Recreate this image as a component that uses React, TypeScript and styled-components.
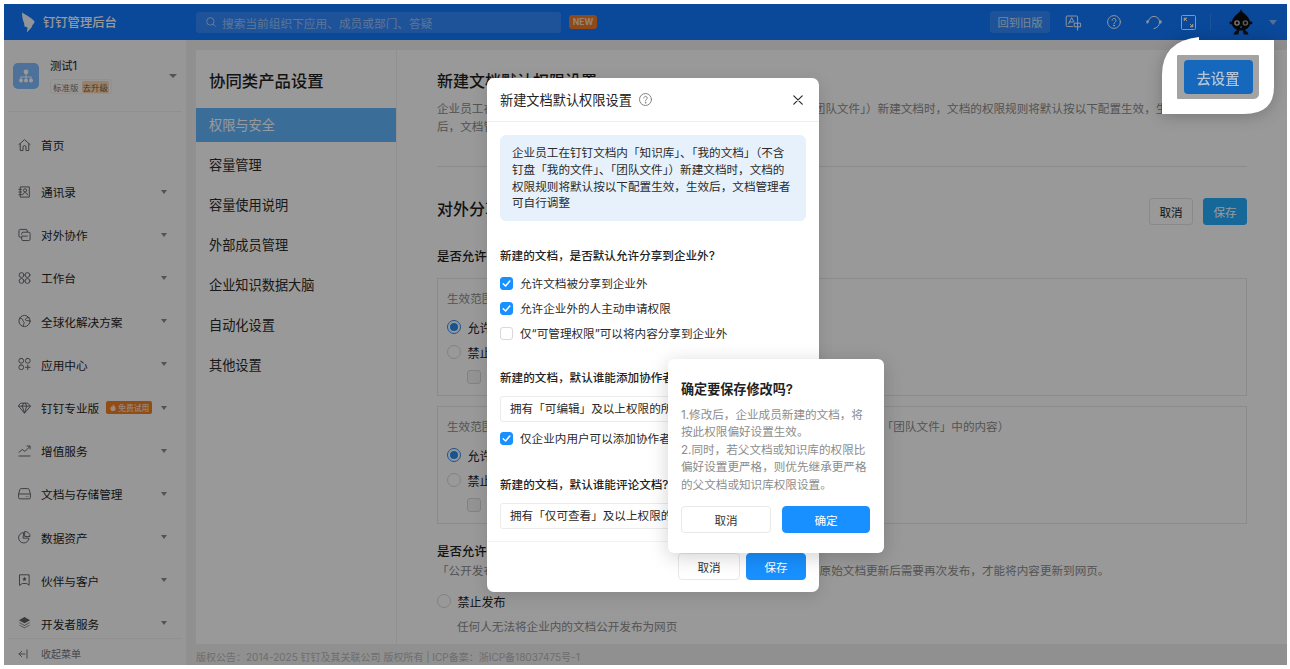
import React from 'react';
import styled, { createGlobalStyle } from 'styled-components';

const GlobalStyle = createGlobalStyle`
  html, body {
    margin: 0;
    padding: 0;
    background: #fff;
  }
  body {
    font-family: Inter, "Noto Sans CJK SC", "Noto Sans", sans-serif;
    color: #222;
  }
  * {
    box-sizing: border-box;
  }
`;

const Page = styled.div`
  width: 1290px;
  height: 669px;
  padding: 4px 3px 4px 4px;
  overflow: hidden;
`;

const Frame = styled.div`
  position: relative;
  width: 1283px;
  height: 661px;
  overflow: hidden;
  display: flex;
  flex-direction: column;
  background: #f0f0f1;
`;

/* ---------- header ---------- */

const Header = styled.header`
  flex: none;
  height: 36px;
  display: flex;
  align-items: center;
  background: #1279ff;
  color: #fff;
`;

const LogoBox = styled.div`
  width: 192px;
  display: flex;
  align-items: center;
  padding-left: 17px;
  gap: 8px;
`;

const LogoTitle = styled.span`
  font-size: 12.3px;
  font-weight: 500;
`;

const SearchBox = styled.div`
  width: 365px;
  height: 21px;
  display: flex;
  align-items: center;
  gap: 6px;
  padding-left: 10px;
  border-radius: 3px;
  background: rgba(255, 255, 255, 0.14);
  font-size: 11.7px;
  color: rgba(255, 255, 255, 0.5);
`;

const NewBadge = styled.span`
  position: relative;
  margin-left: 8px;
  width: 28px;
  height: 14px;
  border-radius: 3px;
  background: #f07a28;
  color: rgba(255, 255, 255, 0.75);
  font-size: 8.5px;
  font-weight: 700;
  line-height: 14px;
  text-align: center;
`;

const HeaderRight = styled.div`
  margin-left: auto;
  display: flex;
  align-items: center;
  color: rgba(255, 255, 255, 0.95);
`;

const OldButton = styled.button`
  width: 60px;
  height: 22px;
  padding: 0;
  border: 0;
  border-radius: 3px;
  background: rgba(255, 255, 255, 0.14);
  color: rgba(255, 255, 255, 0.75);
  font: inherit;
  font-size: 11.3px;
`;

const HeaderIcon = styled.span<{ $left: number }>`
  display: flex;
  margin-left: ${(p) => p.$left}px;
`;

const HeaderDivider = styled.span`
  width: 1px;
  height: 16px;
  margin: 0 18px 0 14px;
  background: rgba(255, 255, 255, 0.14);
`;

const HeaderCaret = styled.span`
  margin: 0 10px 0 16px;
  width: 0;
  height: 0;
  border-left: 4px solid transparent;
  border-right: 4px solid transparent;
  border-top: 5px solid rgba(255, 255, 255, 0.5);
`;

/* ---------- sidebar ---------- */

const Body = styled.div`
  flex: 1;
  min-height: 0;
  display: flex;
`;

const Sidebar = styled.aside`
  flex: none;
  width: 182px;
  display: flex;
  flex-direction: column;
  background: #fcfcfe;
`;

const OrgCard = styled.div`
  flex: none;
  height: 72px;
  margin: 0 4px;
  padding: 23px 0 0 5px;
  display: flex;
  gap: 11px;
  border-bottom: 1px solid #f0f0f2;
`;

const OrgAvatar = styled.div`
  width: 26px;
  height: 26px;
  border-radius: 5px;
  background: #80bcff;
  display: flex;
  align-items: center;
  justify-content: center;
`;

const OrgInfo = styled.div`
  margin-top: -5px;
  display: flex;
  flex-direction: column;
  align-items: flex-start;
  gap: 5px;
`;

const OrgName = styled.span`
  font-size: 11.3px;
  line-height: 16px;
  color: #222;
`;

const OrgTag = styled.span`
  display: flex;
  align-items: center;
  height: 15px;
  padding: 0 2px;
  border: 1px solid #f0f0f0;
  border-radius: 3px;
  font-size: 8.5px;
  color: #777;
  gap: 3px;
`;

const UpgradeTag = styled.span`
  padding: 0 1px;
  border-radius: 2px;
  background: #fbd9b5;
  color: #7d5c35;
`;

const Caret = styled.span`
  flex: none;
  width: 0;
  height: 0;
  margin-left: auto;
  border-left: 3.5px solid transparent;
  border-right: 3.5px solid transparent;
  border-top: 4.5px solid #8a8a8c;
`;

const OrgCaret = styled(Caret)`
  margin-top: 11px;
  margin-right: 5px;
  border-left-width: 4px;
  border-right-width: 4px;
`;

const Nav = styled.nav`
  flex: 1;
  min-height: 0;
  overflow: hidden;
  padding-top: 11px;
`;

const NavItem = styled.div`
  height: 43.2px;
  display: flex;
  align-items: center;
  padding: 0 19px 0 14px;
  font-size: 11.65px;
  color: #1f1f1f;
  &:first-child {
    margin-bottom: 3.8px;
  }
`;

const NavIcon = styled.span`
  display: flex;
  width: 13px;
  margin-right: 10px;
  color: #5d5f63;
`;

const TrialBadge = styled.span`
  display: flex;
  align-items: center;
  gap: 2px;
  margin-left: 7px;
  width: 46px;
  height: 13px;
  padding-left: 4px;
  border-radius: 2px;
  background: #f57f1e;
  color: rgba(255, 255, 255, 0.75);
  font-size: 7.8px;
  font-weight: 500;
`;

const Collapse = styled.div`
  flex: none;
  height: 27px;
  margin: 0 4px;
  padding: 3px 0 0 10px;
  display: flex;
  align-items: center;
  gap: 13px;
  border-top: 1px solid #f0f0f2;
  font-size: 10px;
  color: #777;
`;

/* ---------- main ---------- */

const Main = styled.main`
  flex: 1;
  min-width: 0;
  display: flex;
  flex-direction: column;
  padding-top: 10px;
`;

const Columns = styled.div`
  flex: 1;
  min-height: 0;
  display: flex;
  gap: 1px;
  margin-left: 10px;
`;

const SettingsMenu = styled.div`
  flex: none;
  width: 200px;
  background: #fff;
`;

const MenuTitle = styled.h2`
  margin: 0;
  padding: 20px 13px 16px;
  height: 58px;
  font-size: 16.4px;
  line-height: 22px;
  font-weight: 500;
  color: #1f1f1f;
`;

const MenuItem = styled.div<{ $active?: boolean }>`
  height: 34px;
  margin-bottom: 6px;
  padding-left: 13px;
  line-height: 34px;
  font-size: 13.2px;
  color: ${(p) => (p.$active ? '#fff' : '#2a2a2a')};
  background: ${(p) => (p.$active ? '#62b8ff' : 'transparent')};
`;

const Content = styled.section`
  flex: 1;
  min-width: 0;
  overflow: hidden;
  background: #fff;
  padding: 20px 40px 0;
`;

const ContentTitle = styled.h3`
  margin: 0;
  font-size: 16px;
  line-height: 22px;
  font-weight: 500;
  color: #1f1f1f;
`;

const Desc = styled.p<{ $top: number }>`
  margin: ${(p) => p.$top}px 0 0;
  font-size: 11.6px;
  line-height: 18px;
  color: #8c8c8c;
  white-space: nowrap;
`;

const Rule = styled.hr`
  margin: 30px 0 0;
  border: 0;
  border-top: 1px solid #e8e8e8;
`;

const TitleRow = styled.div`
  margin-top: 31px;
  height: 27px;
  display: flex;
  align-items: flex-start;
  justify-content: space-between;
`;

const TitleActions = styled.div`
  display: flex;
  gap: 10px;
`;

const SmallButton = styled.button<{ $primary?: boolean }>`
  width: 44px;
  height: 27px;
  padding: 0;
  border: 1px solid ${(p) => (p.$primary ? '#25adff' : '#e4e4e4')};
  border-radius: 3px;
  background: ${(p) => (p.$primary ? '#25adff' : '#fff')};
  color: ${(p) => (p.$primary ? '#fff' : '#222')};
  font: inherit;
  font-size: 11.6px;
`;

const Question = styled.div<{ $top: number }>`
  margin-top: ${(p) => p.$top}px;
  font-size: 12.4px;
  line-height: 18px;
  font-weight: 500;
  color: #1f1f1f;
`;

const ScopeBox = styled.div<{ $top: number }>`
  margin-top: ${(p) => p.$top}px;
  height: 118px;
  padding: 11px 9px 0;
  border: 1px solid #e8e8e8;
`;

const ScopeText = styled.div`
  font-size: 11.6px;
  line-height: 18px;
  color: #8c8c8c;
  white-space: nowrap;
`;

const Radio = styled.span<{ $on?: boolean }>`
  flex: none;
  width: 14px;
  height: 14px;
  border-radius: 50%;
  border: 1px solid ${(p) => (p.$on ? '#2a8bf0' : '#d9d9d9')};
  background: #fff;
  display: flex;
  align-items: center;
  justify-content: center;
  &::after {
    content: '';
    width: 8px;
    height: 8px;
    border-radius: 50%;
    background: ${(p) => (p.$on ? '#2a8bf0' : 'transparent')};
  }
`;

const RadioRow = styled.div<{ $top: number }>`
  display: flex;
  align-items: center;
  gap: 6.5px;
  height: 18px;
  margin-top: ${(p) => p.$top}px;
  font-size: 12px;
  color: #222;
`;

const IndentBox = styled.span`
  display: block;
  width: 14px;
  height: 14px;
  margin: 9px 0 0 20px;
  border: 1px solid #d9d9d9;
  border-radius: 3px;
  background: #f5f5f5;
`;

const PublishNote = styled(Desc)`
  margin-left: 20px;
`;

const Footer = styled.footer`
  flex: none;
  height: 21px;
  margin-left: 10px;
  overflow: hidden;
  font-size: 10px;
  line-height: 27px;
  color: #b8b8b8;
  white-space: nowrap;
`;

/* ---------- overlays ---------- */

const Scrim = styled.div`
  position: absolute;
  inset: 0;
  background: rgba(0, 0, 0, 0.4);
`;

const Modal = styled.div`
  position: absolute;
  left: 483px;
  top: 74px;
  width: 332px;
  height: 514px;
  border-radius: 7px;
  background: #fff;
  box-shadow: 0 4px 16px rgba(0, 0, 0, 0.12);
  display: flex;
  flex-direction: column;
`;

const ModalHead = styled.div`
  flex: none;
  height: 44px;
  padding: 0 13px;
  display: flex;
  align-items: center;
  gap: 7px;
  border-bottom: 1px solid #eee;
  font-size: 13.2px;
  color: #222;
`;

const CloseIcon = styled.span`
  display: flex;
  margin-left: auto;
  margin-right: 3px;
  color: #2a2a2a;
`;

const ModalBody = styled.div`
  flex: 1;
  min-height: 0;
  padding: 13px 13px 0;
`;

const InfoBox = styled.div`
  height: 86px;
  padding: 10px 12px;
  border-radius: 6px;
  background: #e6f1fc;
  font-size: 11.6px;
  line-height: 16.8px;
  color: #2a2a2a;
  white-space: nowrap;
`;

const FieldLabel = styled.div<{ $top: number }>`
  margin-top: ${(p) => p.$top}px;
  font-size: 11.6px;
  line-height: 16px;
  font-weight: 500;
  color: #222;
  white-space: nowrap;
`;

const CheckRow = styled.div<{ $top: number }>`
  margin-top: ${(p) => p.$top}px;
  height: 16px;
  display: flex;
  align-items: center;
  gap: 7px;
  font-size: 11.6px;
  color: #2a2a2a;
  white-space: nowrap;
`;

const CheckBox = styled.span<{ $on?: boolean }>`
  flex: none;
  width: 13px;
  height: 13px;
  border-radius: 3px;
  border: 1px solid ${(p) => (p.$on ? '#1890ff' : '#d9d9d9')};
  background: ${(p) => (p.$on ? '#1890ff' : '#fff')};
  display: flex;
  align-items: center;
  justify-content: center;
`;

const SelectBox = styled.div<{ $top: number }>`
  margin-top: ${(p) => p.$top}px;
  height: 26px;
  padding-left: 9px;
  border: 1px solid #ececec;
  border-radius: 3px;
  font-size: 11.6px;
  line-height: 24px;
  color: #2a2a2a;
  white-space: nowrap;
  overflow: hidden;
`;

const ModalFoot = styled.div`
  flex: none;
  height: 51px;
  padding: 11px 13px 0;
  display: flex;
  justify-content: flex-end;
  gap: 6px;
  border-top: 1px solid #f2f2f2;
`;

const FootButton = styled.button<{ $primary?: boolean }>`
  height: 27px;
  width: ${(p) => (p.$primary ? 60 : 62)}px;
  padding: 0;
  border: 1px solid ${(p) => (p.$primary ? '#1890ff' : '#e8e8e8')};
  border-radius: 4px;
  background: ${(p) => (p.$primary ? '#1890ff' : '#fff')};
  color: ${(p) => (p.$primary ? '#fff' : '#333')};
  font: inherit;
  font-size: 11.6px;
`;

const Confirm = styled.div`
  position: absolute;
  left: 664px;
  top: 355px;
  width: 216px;
  height: 194px;
  padding: 21px 13px 0;
  border-radius: 6px;
  background: #fff;
  box-shadow: 0 4px 20px rgba(0, 0, 0, 0.18);
`;

const ConfirmTitle = styled.div`
  font-size: 13.1px;
  line-height: 18px;
  font-weight: 600;
  color: #222;
`;

const ConfirmText = styled.div`
  margin-top: 9px;
  font-size: 11.6px;
  line-height: 17.4px;
  color: #8c8c8c;
  white-space: nowrap;
`;

const ConfirmActions = styled.div`
  margin-top: 12px;
  display: flex;
  gap: 11px;
`;

const ConfirmButton = styled.button<{ $primary?: boolean }>`
  width: ${(p) => (p.$primary ? 88 : 90)}px;
  height: 27px;
  padding: 0;
  border: 1px solid ${(p) => (p.$primary ? '#1890ff' : '#e8e8e8')};
  border-radius: 4px;
  background: ${(p) => (p.$primary ? '#1890ff' : '#fff')};
  color: ${(p) => (p.$primary ? '#fff' : '#333')};
  font: inherit;
  font-size: 11.6px;
`;

const CoachShadow = styled.div`
  position: absolute;
  left: 1158px;
  top: 33px;
  filter: drop-shadow(0 2px 8px rgba(0, 0, 0, 0.22));
`;

const Coach = styled.div`
  width: 112px;
  height: 77px;
  padding: 18px 0 0 15px;
  background: #fff;
  clip-path: path('M37 0 L37 3 L112 3 L112 50 Q112 77 82 77 L0 77 L0 38 Q0 4 37 0 Z');
`;

const CoachHole = styled.div`
  width: 82px;
  height: 44px;
  border-radius: 1px 1px 5px 1px;
  background: #a3a3a3;
  display: flex;
  align-items: center;
  justify-content: center;
`;

const CoachButton = styled.button`
  width: 69px;
  height: 34px;
  padding: 0;
  border: 0;
  border-radius: 4px;
  background: #1668bd;
  color: #b4c4d6;
  font: inherit;
  font-size: 14.4px;
  font-weight: 500;
`;

/* ---------- drawings ---------- */

const LogoMark = () => (
  <svg width="14" height="21" viewBox="0 0 14 21" fill="rgba(255,255,255,0.95)">
    <path d="M1 0.5 C5 3 11 6 13.6 9.5 C13.8 10.6 11.8 13 10.6 14.2 L11.4 14.4 L5.8 20.5 L6.6 15.6 L3.6 14.6 C3.2 12.6 3 11.6 3.2 11 C2 9 1 6 1 0.5 Z" />
  </svg>
);

const Stroke = ({ children }: { children: React.ReactNode }) => (
  <svg
    width="14"
    height="14"
    viewBox="0 0 14 14"
    fill="none"
    stroke="currentColor"
    strokeWidth="1"
    strokeLinecap="round"
    strokeLinejoin="round"
  >
    {children}
  </svg>
);

const icons: Record<string, React.ReactNode> = {
  home: <Stroke><path d="M1 6.6 7 1.2l6 5.4M2.4 5.6V13h3V9.2a1.6 1.6 0 0 1 3.2 0V13h3V5.6" /></Stroke>,
  contacts: <Stroke><path d="M2.8 1.5h9.4v11H2.8zM1 4.2h2.8M1 7h2.8M1 9.8h2.8" /><circle cx="7.6" cy="5.2" r="1.7" /><path d="M5 10c.4-1.6 1.4-2.3 2.6-2.3s2.2.7 2.6 2.3" /></Stroke>,
  share: <Stroke><path d="M3.5 9.5H2.4A1.4 1.4 0 0 1 1 8.1V2.4A1.4 1.4 0 0 1 2.4 1h6.2A1.4 1.4 0 0 1 10 2.4v1" /><path d="M4 6.2V5.4A1.4 1.4 0 0 1 5.4 4h6.2A1.4 1.4 0 0 1 13 5.4v6.2a1.4 1.4 0 0 1-1.4 1.4H5.4A1.4 1.4 0 0 1 4 11.6V8.2h6" /></Stroke>,
  grid: <Stroke><circle cx="3.8" cy="3.8" r="2.6" /><circle cx="10.2" cy="3.8" r="2.6" /><circle cx="3.8" cy="10.2" r="2.6" /><circle cx="10.2" cy="10.2" r="2.6" /></Stroke>,
  globe: <Stroke><circle cx="7" cy="7" r="6" /><path d="M2 4c2 .2 3.4 1.2 3.2 2.4-.2 1 1.6 1.2 1.4 2.6-.1 1-.8 1.6-1 3.6M12 3.4C10 3 8.2 4 8 5.4c-.1 1 1.4 1.4 3 1.2l1.8.6" /></Stroke>,
  apps: <Stroke><rect x="1" y="1" width="5" height="5" rx="2.2" /><rect x="8" y="1" width="5" height="5" rx="2.2" /><rect x="1" y="8" width="5" height="5" rx="2.2" /><path d="M10.5 8v5M8 10.5h5" /></Stroke>,
  gem: <Stroke><path d="M3.4 1.8h7.2L13.4 5 7 12.6.6 5zM.6 5h12.8M4.6 5 7 12.6 9.4 5 7.8 1.8M4.6 5l1.6-3.2" /></Stroke>,
  chart: <Stroke><path d="M1 8.4 4.6 5.4 7.6 7.4 12.6 2.2M9.6 1.6h3.4v3.2M1 12.4h12" /></Stroke>,
  storage: <svg width="14" height="14" viewBox="0 0 14 14" fill="none" stroke="currentColor"><path d="M.6 7.2 2 2.2A1.4 1.4 0 0 1 3.4 1.2h7.2A1.4 1.4 0 0 1 12 2.2l1.4 5v3.6a1.4 1.4 0 0 1-1.4 1.4H2A1.4 1.4 0 0 1 .6 10.8zM.6 7h12.8" /><path d="M8.4 9.8h.8M10.4 9.8h.8" /></svg>,
  pie: <Stroke><path d="M5.8 2.2a5.6 5.6 0 1 0 6 6H5.8z" /><path d="M7.6 1a5.4 5.4 0 0 1 5.4 5.4H7.6z" /></Stroke>,
  partner: <Stroke><path d="M2 1.4h10v11.2l-2.6-1.8H4.6L2 12.6z" /><path d="m7 3.6.7 1.5 1.6.2-1.2 1.1.3 1.6-1.4-.8-1.4.8.3-1.6-1.2-1.1 1.6-.2z" fill="currentColor" stroke="none" /></Stroke>,
  layers: <svg width="14" height="14" viewBox="0 0 14 14" fill="currentColor"><path d="M7 .6 13 4 7 7.4 1 4z" /><path d="M1.8 6.2 7 9.1l5.2-2.9.8.6L7 10.2 1 6.8z" opacity=".75" /><path d="M1.8 8.8 7 11.7l5.2-2.9.8.6L7 12.8 1 9.4z" opacity=".6" /></svg>,
};

const navItems: { key: string; label: string; caret?: boolean; trial?: boolean }[] = [
  { key: 'home', label: '首页' },
  { key: 'contacts', label: '通讯录', caret: true },
  { key: 'share', label: '对外协作', caret: true },
  { key: 'grid', label: '工作台', caret: true },
  { key: 'globe', label: '全球化解决方案', caret: true },
  { key: 'apps', label: '应用中心', caret: true },
  { key: 'gem', label: '钉钉专业版', caret: true, trial: true },
  { key: 'chart', label: '增值服务', caret: true },
  { key: 'storage', label: '文档与存储管理', caret: true },
  { key: 'pie', label: '数据资产', caret: true },
  { key: 'partner', label: '伙伴与客户', caret: true },
  { key: 'layers', label: '开发者服务', caret: true },
];

const menuItems = ['权限与安全', '容量管理', '容量使用说明', '外部成员管理', '企业知识数据大脑', '自动化设置', '其他设置'];

const Tick = () => (
  <svg width="9" height="9" viewBox="0 0 9 9" fill="none" stroke="#fff" strokeWidth="1.5" strokeLinecap="round" strokeLinejoin="round">
    <path d="M1.2 4.8 3.6 7 7.8 2" />
  </svg>
);

const Mascot = () => (
  <svg width="24" height="26" viewBox="0 0 24 26">
    <path d="M12 0c.6 3 3 4 5.5 6.5C20.5 9.5 21.5 12 21 15c-.6 4-4.5 6.5-9 6.5S3.6 19 3 15c-.5-3 .5-5.5 3.5-8.5C9 4 11.4 3 12 0z" fill="#0c0c0e" />
    <circle cx="1.9" cy="14" r="1.4" fill="#0c0c0e" />
    <circle cx="22.1" cy="14" r="1.4" fill="#0c0c0e" />
    <circle cx="8" cy="14" r="2.8" fill="#c9c9c9" />
    <circle cx="16.4" cy="14" r="2.8" fill="#9a9a9a" />
    <circle cx="8" cy="14" r="1.4" fill="#111" />
    <circle cx="16.4" cy="14" r="1.4" fill="#111" />
    <circle cx="12" cy="18" r="1.1" fill="#1d6fd0" />
    <path d="M4.5 25.5c.4-2.2 2-3.4 4-4.4h1.6l-.7 4.4zM19.5 25.5c-.4-2.2-2-3.4-4-4.4h-1.6l.7 4.4z" fill="#151515" />
  </svg>
);

const App = () => (
  <Page>
    <GlobalStyle />
    <Frame>
      <Header>
        <LogoBox>
          <LogoMark />
          <LogoTitle>钉钉管理后台</LogoTitle>
        </LogoBox>
        <SearchBox>
          <svg width="10" height="10" viewBox="0 0 10 10" fill="none" stroke="rgba(255,255,255,.55)" strokeWidth="1">
            <circle cx="4.4" cy="4.4" r="3.7" />
            <path d="m7.2 7.2 2.2 2.2" strokeLinecap="round" />
          </svg>
          搜索当前组织下应用、成员或部门、答疑
        </SearchBox>
        <NewBadge>NEW</NewBadge>
        <HeaderRight>
          <OldButton>回到旧版</OldButton>
          <HeaderIcon $left={15}>
            <svg width="17" height="17" viewBox="0 0 17 17" fill="none" stroke="currentColor" strokeLinejoin="round" strokeLinecap="round">
              <path d="M7.5 12.5H2.2a1 1 0 0 1-1-1V3a1 1 0 0 1 1-1h9.4a1 1 0 0 1 1 1v3.6" />
              <path d="m3.6 10 3-6.4L9 8M4.6 8H8" />
              <path d="M9.6 9.2h6v3.6h-6zM12.6 7.6v8.6" />
            </svg>
          </HeaderIcon>
          <HeaderIcon $left={25}>
            <svg width="14" height="14" viewBox="0 0 14 14" fill="none" stroke="currentColor" strokeLinecap="round">
              <circle cx="7" cy="7" r="6.4" />
              <path d="M5 5.4a2 2 0 1 1 3.2 1.6C7.4 7.6 7 8 7 8.8" />
              <circle cx="7" cy="10.6" r=".5" fill="currentColor" />
            </svg>
          </HeaderIcon>
          <HeaderIcon $left={25}>
            <svg width="16" height="16" viewBox="0 0 16 16" fill="none" stroke="currentColor" strokeLinecap="round">
              <path d="M2.4 8A5.6 5.6 0 0 1 13.6 8c0 3.4-2.4 6-5.6 6.6" />
              <rect x=".6" y="6.6" width="1.3" height="2.8" rx=".6" fill="currentColor" strokeWidth=".4" />
              <rect x="14.1" y="6.6" width="1.3" height="2.8" rx=".6" fill="currentColor" strokeWidth=".4" />
            </svg>
          </HeaderIcon>
          <HeaderIcon $left={19}>
            <svg width="15" height="15" viewBox="0 0 15 15" fill="none" stroke="currentColor">
              <rect x=".5" y=".5" width="14" height="14" rx="1" />
              <path d="M3 6V3h3L3 6zM12 9v3H9l3-3z" fill="currentColor" strokeWidth=".6" />
              <path d="m4 4 2 2M9 9l2 2" />
            </svg>
          </HeaderIcon>
          <HeaderDivider />
          <Mascot />
          <HeaderCaret />
        </HeaderRight>
      </Header>
      <Body>
        <Sidebar>
          <OrgCard>
            <OrgAvatar>
              <svg width="16" height="14" viewBox="0 0 16 14" fill="#fff">
                <circle cx="8" cy="3" r="2.4" />
                <path d="M7.5 5h1v2.4h5V10h-1V8.4h-4V10h-1V8.4h-4V10h-1V7.4h5z" />
                <circle cx="3" cy="11.4" r="2" />
                <circle cx="8" cy="11.4" r="2" />
                <circle cx="13" cy="11.4" r="2" />
              </svg>
            </OrgAvatar>
            <OrgInfo>
              <OrgName>测试1</OrgName>
              <OrgTag>
                标准版
                <UpgradeTag>去升级</UpgradeTag>
              </OrgTag>
            </OrgInfo>
            <OrgCaret />
          </OrgCard>
          <Nav>
            {navItems.map((item) => (
              <NavItem key={item.key}>
                <NavIcon>{icons[item.key]}</NavIcon>
                {item.label}
                {item.trial && (
                  <TrialBadge>
                    <svg width="6" height="7" viewBox="0 0 6 7" fill="rgba(255,255,255,.8)">
                      <path d="M3 0c.4 1.4 2.6 2.4 2.6 4.4A2.6 2.6 0 0 1 .4 4.4C.4 3.4 1 3 1.4 2.2c.4.4.6.6.7 1C2.6 2.4 3 1.2 3 0z" />
                    </svg>
                    免费试用
                  </TrialBadge>
                )}
                {item.caret && <Caret />}
              </NavItem>
            ))}
          </Nav>
          <Collapse>
            <svg width="10" height="10" viewBox="0 0 10 10" fill="none" stroke="#777" strokeLinecap="round" strokeLinejoin="round">
              <path d="M9 .8v8.4M7 5H1M3.6 2.4 1 5l2.6 2.6" />
            </svg>
            收起菜单
          </Collapse>
        </Sidebar>
        <Main>
          <Columns>
            <SettingsMenu>
              <MenuTitle>协同类产品设置</MenuTitle>
              {menuItems.map((label, idx) => (
                <MenuItem key={label} $active={idx === 0}>
                  {label}
                </MenuItem>
              ))}
            </SettingsMenu>
            <Content>
              <ContentTitle>新建文档默认权限设置</ContentTitle>
              <Desc $top={8}>
                企业员工在钉钉文档内「知识库」、「我的文档」（不含钉盘「我的文件」、「团队文件」）新建文档时，文档的权限规则将默认按以下配置生效，生效
                <br />
                后，文档管理者可自行调整
              </Desc>
              <Rule />
              <TitleRow>
                <ContentTitle>对外分享设置</ContentTitle>
                <TitleActions>
                  <SmallButton>取消</SmallButton>
                  <SmallButton $primary>保存</SmallButton>
                </TitleActions>
              </TitleRow>
              <Question $top={23}>是否允许内容分享到企业外</Question>
              <ScopeBox $top={12}>
                <ScopeText>生效范围：企业「知识库」及「我的文档」中的内容</ScopeText>
                <RadioRow $top={10}>
                  <Radio $on />
                  允许
                </RadioRow>
                <RadioRow $top={7}>
                  <Radio />
                  禁止
                </RadioRow>
                <IndentBox />
              </ScopeBox>
              <ScopeBox $top={10}>
                <ScopeText>生效范围：钉钉文档企业「知识库」、「我的文档」（不含钉盘）以及钉盘「我的文件」、「团队文件」中的内容）</ScopeText>
                <RadioRow $top={10}>
                  <Radio $on />
                  允许
                </RadioRow>
                <RadioRow $top={7}>
                  <Radio />
                  禁止
                </RadioRow>
                <IndentBox />
              </ScopeBox>
              <Question $top={19}>是否允许公开发布到互联网</Question>
              <Desc $top={1}>「公开发布」后，任何人都可以通过链接访问企业内的文档内容及其附件，原始文档更新后需要再次发布，才能将内容更新到网页。</Desc>
              <RadioRow $top={12}>
                <Radio />
                禁止发布
              </RadioRow>
              <PublishNote $top={8}>任何人无法将企业内的文档公开发布为网页</PublishNote>
            </Content>
          </Columns>
          <Footer>版权公告：2014-2025 钉钉及其关联公司 版权所有 | ICP备案：浙ICP备18037475号-1</Footer>
        </Main>
      </Body>
      <Scrim />
      <CoachShadow>
        <Coach>
          <CoachHole>
            <CoachButton>去设置</CoachButton>
          </CoachHole>
        </Coach>
      </CoachShadow>
      <Modal>
        <ModalHead>
          新建文档默认权限设置
          <svg width="13" height="13" viewBox="0 0 13 13" fill="none" stroke="#777" strokeWidth=".9" strokeLinecap="round">
            <circle cx="6.5" cy="6.5" r="6" />
            <path d="M4.8 5a1.7 1.7 0 1 1 2.7 1.4c-.6.4-1 .8-1 1.5" />
            <circle cx="6.5" cy="9.8" r=".3" />
          </svg>
          <CloseIcon>
            <svg width="10" height="10" viewBox="0 0 10 10" fill="none" stroke="currentColor" strokeWidth="1.2" strokeLinecap="round">
              <path d="m.8.8 8.4 8.4M9.2.8.8 9.2" />
            </svg>
          </CloseIcon>
        </ModalHead>
        <ModalBody>
          <InfoBox>
            企业员工在钉钉文档内「知识库」、「我的文档」（不含
            <br />
            钉盘「我的文件」、「团队文件」）新建文档时，文档的
            <br />
            权限规则将默认按以下配置生效，生效后，文档管理者
            <br />
            可自行调整
          </InfoBox>
          <FieldLabel $top={27}>新建的文档，是否默认允许分享到企业外?</FieldLabel>
          <CheckRow $top={11}>
            <CheckBox $on>
              <Tick />
            </CheckBox>
            允许文档被分享到企业外
          </CheckRow>
          <CheckRow $top={9}>
            <CheckBox $on>
              <Tick />
            </CheckBox>
            允许企业外的人主动申请权限
          </CheckRow>
          <CheckRow $top={9}>
            <CheckBox />
            仅“可管理权限”可以将内容分享到企业外
          </CheckRow>
          <FieldLabel $top={29}>新建的文档，默认谁能添加协作者?</FieldLabel>
          <SelectBox $top={10}>拥有「可编辑」及以上权限的所有人</SelectBox>
          <CheckRow $top={8}>
            <CheckBox $on>
              <Tick />
            </CheckBox>
            仅企业内用户可以添加协作者
          </CheckRow>
          <FieldLabel $top={31}>新建的文档，默认谁能评论文档?</FieldLabel>
          <SelectBox $top={10}>拥有「仅可查看」及以上权限的所有人</SelectBox>
        </ModalBody>
        <ModalFoot>
          <FootButton>取消</FootButton>
          <FootButton $primary>保存</FootButton>
        </ModalFoot>
      </Modal>
      <Confirm>
        <ConfirmTitle>确定要保存修改吗?</ConfirmTitle>
        <ConfirmText>
          1.修改后，企业成员新建的文档，将
          <br />
          按此权限偏好设置生效。
          <br />
          2.同时，若父文档或知识库的权限比
          <br />
          偏好设置更严格，则优先继承更严格
          <br />
          的父文档或知识库权限设置。
        </ConfirmText>
        <ConfirmActions>
          <ConfirmButton>取消</ConfirmButton>
          <ConfirmButton $primary>确定</ConfirmButton>
        </ConfirmActions>
      </Confirm>
    </Frame>
  </Page>
);

export default App;
